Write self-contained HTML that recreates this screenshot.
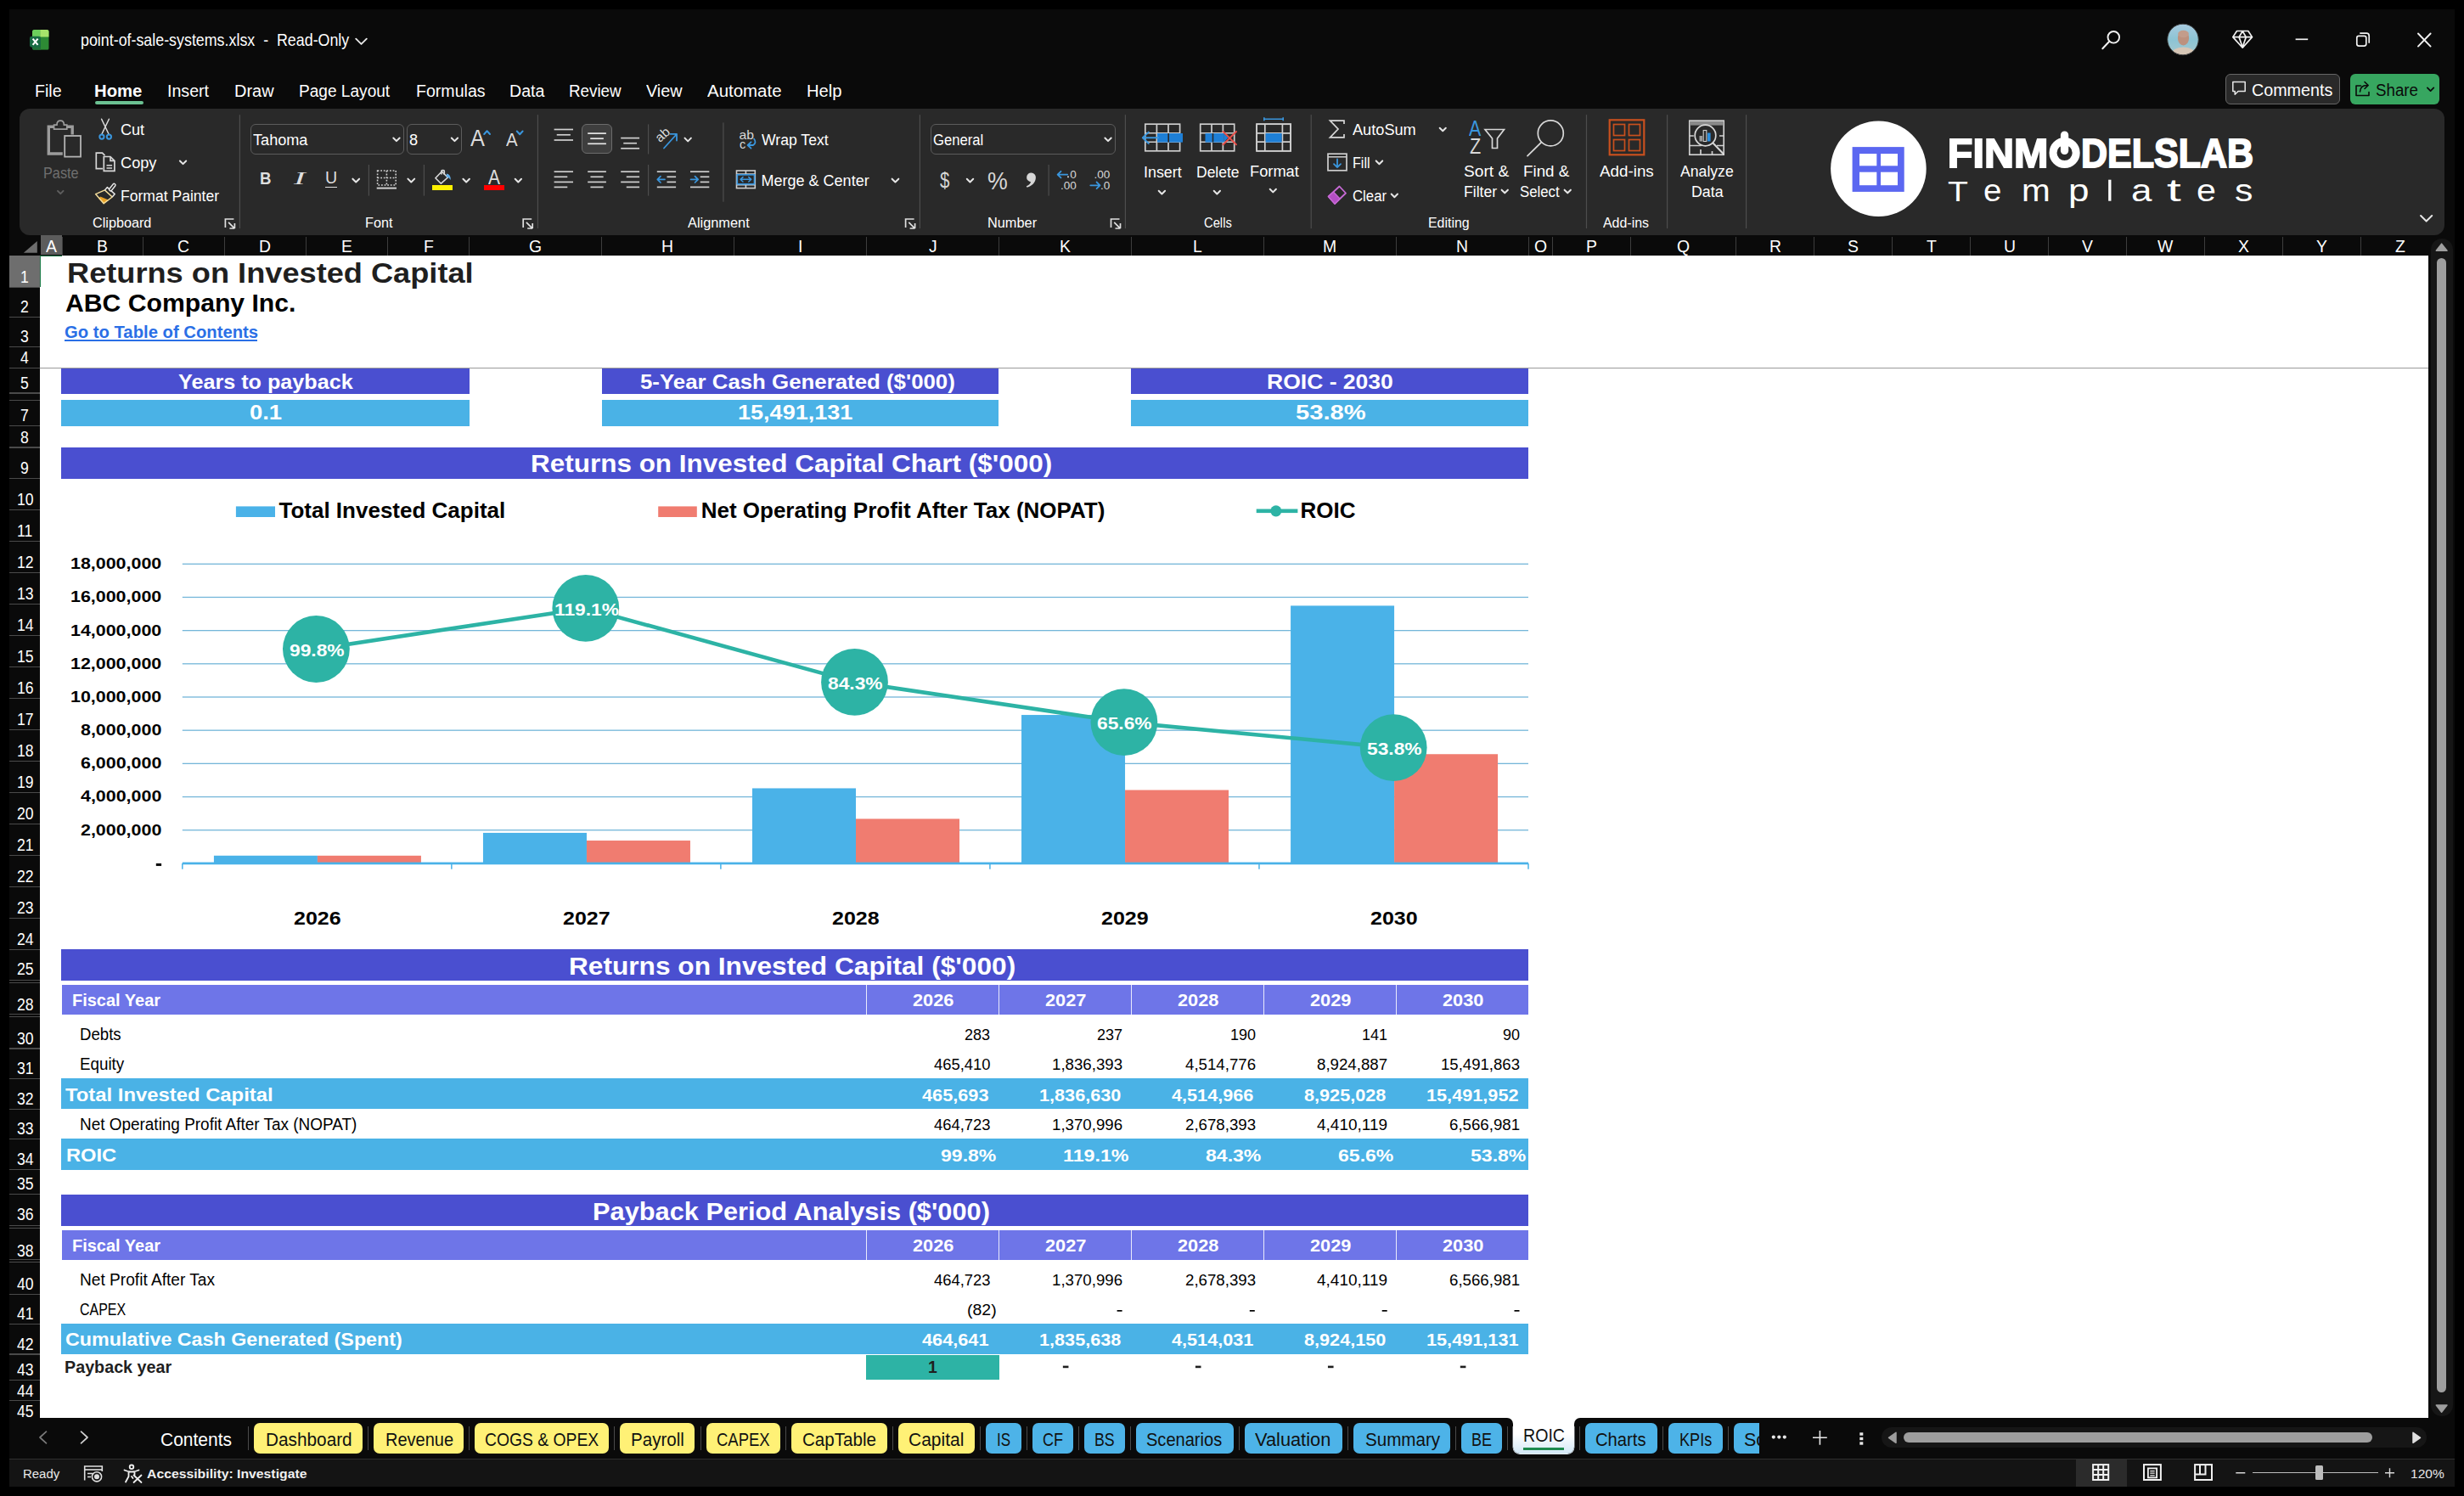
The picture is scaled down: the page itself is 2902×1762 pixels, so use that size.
<!DOCTYPE html>
<html><head><meta charset="utf-8"><title>point-of-sale-systems.xlsx - Excel</title>
<style>
html,body{margin:0;padding:0;background:#000;}
body{width:2902px;height:1762px;position:relative;overflow:hidden;font-family:"Liberation Sans",sans-serif;}
.r{position:absolute;}
.t{position:absolute;white-space:pre;line-height:1;transform-origin:0 0;}
svg.ov{position:absolute;left:0;top:0;}
</style></head><body>
<div class="r" style="left:11px;top:11px;width:2880px;height:1740px;background:#0a0a0a;"></div>
<div class="r" style="left:111.6px;top:119px;width:57px;height:4px;background:#6bc192;border-radius:2px;"></div>
<div class="r" style="left:2621.2px;top:87.1px;width:134.4px;height:35.9px;background:#292929;border-radius:6px;border:1px solid #666;box-sizing:border-box;"></div>
<div class="r" style="left:2768px;top:87.1px;width:105.1px;height:35.9px;background:#37a660;border-radius:6px;"></div>
<div class="r" style="left:23px;top:128px;width:2856px;height:149.3px;background:#292929;border-radius:12px;"></div>
<div class="r" style="left:47.2px;top:301px;width:2813.1px;height:1369px;background:#fff;"></div>
<div class="r" style="left:47.5px;top:277.3px;width:25.5px;height:23.2px;background:#5c5c5c;"></div>
<div class="r" style="left:72.5px;top:279px;width:1px;height:21.5px;background:#3d3d3d;"></div>
<div class="r" style="left:167.9px;top:279px;width:1px;height:21.5px;background:#3d3d3d;"></div>
<div class="r" style="left:263.7px;top:279px;width:1px;height:21.5px;background:#3d3d3d;"></div>
<div class="r" style="left:359.9px;top:279px;width:1px;height:21.5px;background:#3d3d3d;"></div>
<div class="r" style="left:456.1px;top:279px;width:1px;height:21.5px;background:#3d3d3d;"></div>
<div class="r" style="left:552.3px;top:279px;width:1px;height:21.5px;background:#3d3d3d;"></div>
<div class="r" style="left:708.1px;top:279px;width:1px;height:21.5px;background:#3d3d3d;"></div>
<div class="r" style="left:863.9px;top:279px;width:1px;height:21.5px;background:#3d3d3d;"></div>
<div class="r" style="left:1019.8px;top:279px;width:1px;height:21.5px;background:#3d3d3d;"></div>
<div class="r" style="left:1176px;top:279px;width:1px;height:21.5px;background:#3d3d3d;"></div>
<div class="r" style="left:1331.9px;top:279px;width:1px;height:21.5px;background:#3d3d3d;"></div>
<div class="r" style="left:1488.1px;top:279px;width:1px;height:21.5px;background:#3d3d3d;"></div>
<div class="r" style="left:1644px;top:279px;width:1px;height:21.5px;background:#3d3d3d;"></div>
<div class="r" style="left:1799.8px;top:279px;width:1px;height:21.5px;background:#3d3d3d;"></div>
<div class="r" style="left:1827.8px;top:279px;width:1px;height:21.5px;background:#3d3d3d;"></div>
<div class="r" style="left:1920px;top:279px;width:1px;height:21.5px;background:#3d3d3d;"></div>
<div class="r" style="left:2044.2px;top:279px;width:1px;height:21.5px;background:#3d3d3d;"></div>
<div class="r" style="left:2136px;top:279px;width:1px;height:21.5px;background:#3d3d3d;"></div>
<div class="r" style="left:2227.9px;top:279px;width:1px;height:21.5px;background:#3d3d3d;"></div>
<div class="r" style="left:2320.2px;top:279px;width:1px;height:21.5px;background:#3d3d3d;"></div>
<div class="r" style="left:2412.1px;top:279px;width:1px;height:21.5px;background:#3d3d3d;"></div>
<div class="r" style="left:2503.9px;top:279px;width:1px;height:21.5px;background:#3d3d3d;"></div>
<div class="r" style="left:2595.8px;top:279px;width:1px;height:21.5px;background:#3d3d3d;"></div>
<div class="r" style="left:2687.7px;top:279px;width:1px;height:21.5px;background:#3d3d3d;"></div>
<div class="r" style="left:2780px;top:279px;width:1px;height:21.5px;background:#3d3d3d;"></div>
<div class="r" style="left:11px;top:301px;width:36.1px;height:37.5px;background:#6e6e6e;"></div>
<div class="r" style="left:47.1px;top:300.6px;width:1.1px;height:37.9px;background:#1e7e4a;"></div>
<div class="r" style="left:47.1px;top:300.6px;width:25.7px;height:1.1px;background:#1e7e4a;"></div>
<div class="r" style="left:11px;top:337.8px;width:36px;height:1.4px;background:#4a4a4a;"></div>
<div class="r" style="left:11px;top:372.7px;width:36px;height:1.4px;background:#4a4a4a;"></div>
<div class="r" style="left:11px;top:407.6px;width:36px;height:1.4px;background:#4a4a4a;"></div>
<div class="r" style="left:11px;top:432.8px;width:36px;height:1.4px;background:#4a4a4a;"></div>
<div class="r" style="left:11px;top:462.4px;width:36px;height:1.4px;background:#4a4a4a;"></div>
<div class="r" style="left:11px;top:500.6px;width:36px;height:1.4px;background:#4a4a4a;"></div>
<div class="r" style="left:11px;top:526.4px;width:36px;height:1.4px;background:#4a4a4a;"></div>
<div class="r" style="left:11px;top:562.8px;width:36px;height:1.4px;background:#4a4a4a;"></div>
<div class="r" style="left:11px;top:599.8px;width:36px;height:1.4px;background:#4a4a4a;"></div>
<div class="r" style="left:11px;top:636.8px;width:36px;height:1.4px;background:#4a4a4a;"></div>
<div class="r" style="left:11px;top:673.8px;width:36px;height:1.4px;background:#4a4a4a;"></div>
<div class="r" style="left:11px;top:710.8px;width:36px;height:1.4px;background:#4a4a4a;"></div>
<div class="r" style="left:11px;top:747.8px;width:36px;height:1.4px;background:#4a4a4a;"></div>
<div class="r" style="left:11px;top:784.8px;width:36px;height:1.4px;background:#4a4a4a;"></div>
<div class="r" style="left:11px;top:821.8px;width:36px;height:1.4px;background:#4a4a4a;"></div>
<div class="r" style="left:11px;top:858.8px;width:36px;height:1.4px;background:#4a4a4a;"></div>
<div class="r" style="left:11px;top:895.8px;width:36px;height:1.4px;background:#4a4a4a;"></div>
<div class="r" style="left:11px;top:932.8px;width:36px;height:1.4px;background:#4a4a4a;"></div>
<div class="r" style="left:11px;top:969.8px;width:36px;height:1.4px;background:#4a4a4a;"></div>
<div class="r" style="left:11px;top:1006.8px;width:36px;height:1.4px;background:#4a4a4a;"></div>
<div class="r" style="left:11px;top:1043.8px;width:36px;height:1.4px;background:#4a4a4a;"></div>
<div class="r" style="left:11px;top:1080.8px;width:36px;height:1.4px;background:#4a4a4a;"></div>
<div class="r" style="left:11px;top:1117.8px;width:36px;height:1.4px;background:#4a4a4a;"></div>
<div class="r" style="left:11px;top:1154.1px;width:36px;height:1.4px;background:#4a4a4a;"></div>
<div class="r" style="left:11px;top:1193.9px;width:36px;height:1.4px;background:#4a4a4a;"></div>
<div class="r" style="left:11px;top:1234.3px;width:36px;height:1.4px;background:#4a4a4a;"></div>
<div class="r" style="left:11px;top:1269.8px;width:36px;height:1.4px;background:#4a4a4a;"></div>
<div class="r" style="left:11px;top:1305.5px;width:36px;height:1.4px;background:#4a4a4a;"></div>
<div class="r" style="left:11px;top:1340.8px;width:36px;height:1.4px;background:#4a4a4a;"></div>
<div class="r" style="left:11px;top:1376.9px;width:36px;height:1.4px;background:#4a4a4a;"></div>
<div class="r" style="left:11px;top:1405.5px;width:36px;height:1.4px;background:#4a4a4a;"></div>
<div class="r" style="left:11px;top:1442.9px;width:36px;height:1.4px;background:#4a4a4a;"></div>
<div class="r" style="left:11px;top:1483.1px;width:36px;height:1.4px;background:#4a4a4a;"></div>
<div class="r" style="left:11px;top:1523.6px;width:36px;height:1.4px;background:#4a4a4a;"></div>
<div class="r" style="left:11px;top:1558.5px;width:36px;height:1.4px;background:#4a4a4a;"></div>
<div class="r" style="left:11px;top:1594.3px;width:36px;height:1.4px;background:#4a4a4a;"></div>
<div class="r" style="left:11px;top:1624.7px;width:36px;height:1.4px;background:#4a4a4a;"></div>
<div class="r" style="left:11px;top:1649px;width:36px;height:1.4px;background:#4a4a4a;"></div>
<div class="r" style="left:11px;top:1685.3px;width:36px;height:1.4px;background:#4a4a4a;"></div>
<div class="r" style="left:11px;top:470.7px;width:35.5px;height:1.2px;background:#4a4a4a;"></div>
<div class="r" style="left:11px;top:1156.9px;width:35.5px;height:1.2px;background:#4a4a4a;"></div>
<div class="r" style="left:11px;top:1197px;width:35.5px;height:1.2px;background:#4a4a4a;"></div>
<div class="r" style="left:11px;top:1445.6px;width:35.5px;height:1.2px;background:#4a4a4a;"></div>
<div class="r" style="left:11px;top:1486.1px;width:35.5px;height:1.2px;background:#4a4a4a;"></div>
<div class="r" style="left:47.2px;top:433px;width:2813.1px;height:1.1px;background:#9a9a9a;"></div>
<div class="r" style="left:76.3px;top:400.2px;width:226.5px;height:1.8px;background:#2a6fe6;"></div>
<div class="r" style="left:72.2px;top:434px;width:480.6px;height:29.6px;background:#4a4fd0;"></div>
<div class="r" style="left:72.2px;top:470.9px;width:480.6px;height:30.8px;background:#4ab2e6;"></div>
<div class="r" style="left:708.6px;top:434px;width:467.9px;height:29.6px;background:#4a4fd0;"></div>
<div class="r" style="left:708.6px;top:470.9px;width:467.9px;height:30.8px;background:#4ab2e6;"></div>
<div class="r" style="left:1332.4px;top:434px;width:467.9px;height:29.6px;background:#4a4fd0;"></div>
<div class="r" style="left:1332.4px;top:470.9px;width:467.9px;height:30.8px;background:#4ab2e6;"></div>
<div class="r" style="left:72.2px;top:526.9px;width:1728.1px;height:36.9px;background:#4a4fd0;"></div>
<div class="r" style="left:72.2px;top:1118.3px;width:1728.1px;height:36.5px;background:#4a4fd0;"></div>
<div class="r" style="left:72.2px;top:1407px;width:1728.1px;height:36.6px;background:#4a4fd0;"></div>
<div class="r" style="left:73.1px;top:1159.9px;width:1727.2px;height:34.8px;background:#6e75e8;"></div>
<div class="r" style="left:1019.8px;top:1159.9px;width:1px;height:34.8px;background:#e9eafc;"></div>
<div class="r" style="left:1176px;top:1159.9px;width:1px;height:34.8px;background:#e9eafc;"></div>
<div class="r" style="left:1331.9px;top:1159.9px;width:1px;height:34.8px;background:#e9eafc;"></div>
<div class="r" style="left:1488.1px;top:1159.9px;width:1px;height:34.8px;background:#e9eafc;"></div>
<div class="r" style="left:1644px;top:1159.9px;width:1px;height:34.8px;background:#e9eafc;"></div>
<div class="r" style="left:73.1px;top:1449.1px;width:1727.2px;height:34.8px;background:#6e75e8;"></div>
<div class="r" style="left:1019.8px;top:1449.1px;width:1px;height:34.8px;background:#e9eafc;"></div>
<div class="r" style="left:1176px;top:1449.1px;width:1px;height:34.8px;background:#e9eafc;"></div>
<div class="r" style="left:1331.9px;top:1449.1px;width:1px;height:34.8px;background:#e9eafc;"></div>
<div class="r" style="left:1488.1px;top:1449.1px;width:1px;height:34.8px;background:#e9eafc;"></div>
<div class="r" style="left:1644px;top:1449.1px;width:1px;height:34.8px;background:#e9eafc;"></div>
<div class="r" style="left:72px;top:1270.3px;width:1728.3px;height:35.9px;background:#4ab2e6;"></div>
<div class="r" style="left:72px;top:1341.4px;width:1728.3px;height:36.2px;background:#4ab2e6;"></div>
<div class="r" style="left:72px;top:1559.4px;width:1728.3px;height:35.6px;background:#4ab2e6;"></div>
<div class="r" style="left:1020.3px;top:1596.2px;width:156.7px;height:28.4px;background:#2db3a5;"></div>
<div class="r" style="left:295px;top:146px;width:180.6px;height:35.9px;background:#292929;border-radius:6px;border:1px solid #5c5c5c;box-sizing:border-box;"></div>
<div class="r" style="left:479.1px;top:146px;width:64.6px;height:35.9px;background:#292929;border-radius:6px;border:1px solid #5c5c5c;box-sizing:border-box;"></div>
<div class="r" style="left:383.2px;top:219.6px;width:13.8px;height:1.6px;background:#dedede;"></div>
<div class="r" style="left:509px;top:218px;width:23.9px;height:5.9px;background:#fff100;"></div>
<div class="r" style="left:569.8px;top:218px;width:24.4px;height:5.9px;background:#ff0000;"></div>
<div class="r" style="left:685.1px;top:146.4px;width:35.5px;height:35.1px;background:#3e3e3e;border-radius:6px;border:1px solid #6c6c6c;box-sizing:border-box;"></div>
<div class="r" style="left:1096.1px;top:146px;width:217.6px;height:35.9px;background:#292929;border-radius:6px;border:1px solid #5c5c5c;box-sizing:border-box;"></div>
<div class="r" style="left:11px;top:1670px;width:2880px;height:48.5px;background:#0a0a0a;"></div>
<div class="r" style="left:11px;top:1718px;width:2880px;height:1.2px;background:#2e2e2e;"></div>
<div class="r" style="left:11px;top:1719.2px;width:2880px;height:31.8px;background:#141414;"></div>
<div class="r" style="left:2860.3px;top:277.3px;width:30.7px;height:1392.7px;background:#0a0a0a;"></div>
<div class="r" style="left:2862.5px;top:281px;width:26.5px;height:1387px;background:#161616;border-radius:13px;"></div>
<div class="r" style="left:2869.8px;top:304px;width:11.7px;height:1336px;background:#9e9e9e;border-radius:6px;"></div>
<div class="r" style="left:2216px;top:1681px;width:642.4px;height:23.8px;background:#161616;border-radius:12px;"></div>
<div class="r" style="left:2241.6px;top:1687.3px;width:552.8px;height:12px;background:#9e9e9e;border-radius:6px;"></div>
<div class="r" style="left:299.2px;top:1675.8px;width:127.5px;height:36.1px;background:#fff176;border-radius:7px;"></div>
<div class="r" style="left:291.9px;top:1680.4px;width:1.2px;height:27.4px;background:#4a4a4a;"></div>
<div class="r" style="left:440.1px;top:1675.8px;width:105.7px;height:36.1px;background:#fff176;border-radius:7px;"></div>
<div class="r" style="left:432.8px;top:1680.4px;width:1.2px;height:27.4px;background:#4a4a4a;"></div>
<div class="r" style="left:559.2px;top:1675.8px;width:157.6px;height:36.1px;background:#fff176;border-radius:7px;"></div>
<div class="r" style="left:551.9px;top:1680.4px;width:1.2px;height:27.4px;background:#4a4a4a;"></div>
<div class="r" style="left:730.2px;top:1675.8px;width:88.3px;height:36.1px;background:#fff176;border-radius:7px;"></div>
<div class="r" style="left:722.9px;top:1680.4px;width:1.2px;height:27.4px;background:#4a4a4a;"></div>
<div class="r" style="left:832.2px;top:1675.8px;width:86.5px;height:36.1px;background:#fff176;border-radius:7px;"></div>
<div class="r" style="left:824.9px;top:1680.4px;width:1.2px;height:27.4px;background:#4a4a4a;"></div>
<div class="r" style="left:932.1px;top:1675.8px;width:112.6px;height:36.1px;background:#fff176;border-radius:7px;"></div>
<div class="r" style="left:924.8px;top:1680.4px;width:1.2px;height:27.4px;background:#4a4a4a;"></div>
<div class="r" style="left:1058.1px;top:1675.8px;width:89.8px;height:36.1px;background:#fff176;border-radius:7px;"></div>
<div class="r" style="left:1050.8px;top:1680.4px;width:1.2px;height:27.4px;background:#4a4a4a;"></div>
<div class="r" style="left:1161.3px;top:1675.8px;width:41.4px;height:36.1px;background:#4db3e8;border-radius:7px;"></div>
<div class="r" style="left:1154px;top:1680.4px;width:1.2px;height:27.4px;background:#4a4a4a;"></div>
<div class="r" style="left:1216px;top:1675.8px;width:47.5px;height:36.1px;background:#4db3e8;border-radius:7px;"></div>
<div class="r" style="left:1208.7px;top:1680.4px;width:1.2px;height:27.4px;background:#4a4a4a;"></div>
<div class="r" style="left:1277.2px;top:1675.8px;width:47.5px;height:36.1px;background:#4db3e8;border-radius:7px;"></div>
<div class="r" style="left:1269.9px;top:1680.4px;width:1.2px;height:27.4px;background:#4a4a4a;"></div>
<div class="r" style="left:1338.1px;top:1675.8px;width:114.5px;height:36.1px;background:#4db3e8;border-radius:7px;"></div>
<div class="r" style="left:1330.8px;top:1680.4px;width:1.2px;height:27.4px;background:#4a4a4a;"></div>
<div class="r" style="left:1466px;top:1675.8px;width:114.8px;height:36.1px;background:#4db3e8;border-radius:7px;"></div>
<div class="r" style="left:1458.7px;top:1680.4px;width:1.2px;height:27.4px;background:#4a4a4a;"></div>
<div class="r" style="left:1594.1px;top:1675.8px;width:113.6px;height:36.1px;background:#4db3e8;border-radius:7px;"></div>
<div class="r" style="left:1586.8px;top:1680.4px;width:1.2px;height:27.4px;background:#4a4a4a;"></div>
<div class="r" style="left:1721.1px;top:1675.8px;width:47.8px;height:36.1px;background:#4db3e8;border-radius:7px;"></div>
<div class="r" style="left:1713.8px;top:1680.4px;width:1.2px;height:27.4px;background:#4a4a4a;"></div>
<div class="r" style="left:1867.2px;top:1675.8px;width:84.6px;height:36.1px;background:#4db3e8;border-radius:7px;"></div>
<div class="r" style="left:1859.9px;top:1680.4px;width:1.2px;height:27.4px;background:#4a4a4a;"></div>
<div class="r" style="left:1965.2px;top:1675.8px;width:63.6px;height:36.1px;background:#4db3e8;border-radius:7px;"></div>
<div class="r" style="left:1957.9px;top:1680.4px;width:1.2px;height:27.4px;background:#4a4a4a;"></div>
<div class="r" style="left:2042.2px;top:1675.8px;width:29.8px;height:36.1px;background:#4db3e8;border-radius:7px 0 0 7px;"></div>
<div class="r" style="left:2034.9px;top:1680.4px;width:1.2px;height:27.4px;background:#4a4a4a;"></div>
<div class="r" style="left:1782.3px;top:1669.5px;width:71.5px;height:42.3px;background:linear-gradient(#ffffff 45%,#d3e8f7);border-radius:0 0 8px 8px;box-shadow:0 0.5px 0 0.4px #e6eef5;"></div>
<div class="r" style="left:1775.3px;top:1669.5px;width:7px;height:7px;background:#fff;"></div>
<div class="r" style="left:1853.8px;top:1669.5px;width:7px;height:7px;background:#fff;"></div>
<div class="r" style="left:1770px;top:1670px;width:12.3px;height:10px;background:#0a0a0a;border-radius:0 7px 0 0;"></div>
<div class="r" style="left:1853.8px;top:1670px;width:12.2px;height:10px;background:#0a0a0a;border-radius:7px 0 0 0;"></div>
<div class="r" style="left:1794.2px;top:1704.6px;width:48.2px;height:3.3px;background:#1d8a4e;"></div>
<div class="r" style="left:1859.9px;top:1680.4px;width:1.2px;height:27.4px;background:#4a4a4a;"></div>
<div class="r" style="left:1775px;top:1680.4px;width:1.2px;height:27.4px;background:#4a4a4a;"></div>
<div class="r" style="left:2444.8px;top:1719.2px;width:60.4px;height:31.8px;background:#2b2b2b;"></div>
<div class="r" style="left:2652.7px;top:1734.2px;width:147.9px;height:1.3px;background:#bdbdbd;"></div>
<div class="r" style="left:2727.4px;top:1726px;width:8.4px;height:17.3px;background:#bdbdbd;border-radius:1.5px;"></div>
<svg class="ov" width="2902" height="1762" viewBox="0 0 2902 1762">
<path d="M43.8 284 L43.8 297.8 L27.8 297.8 Z" fill="#6e6e6e"/>
<rect x="1315.6" y="1543" width="6" height="1.7" fill="#000"/>
<rect x="1471.8" y="1543" width="6" height="1.7" fill="#000"/>
<rect x="1627.7" y="1543" width="6" height="1.7" fill="#000"/>
<rect x="1783.5" y="1543" width="6" height="1.7" fill="#000"/>
<rect x="1251.85" y="1608.6" width="6.6" height="2.6" fill="#1f1f1f"/>
<rect x="1407.9" y="1608.6" width="6.6" height="2.6" fill="#1f1f1f"/>
<rect x="1563.95" y="1608.6" width="6.6" height="2.6" fill="#1f1f1f"/>
<rect x="1719.8" y="1608.6" width="6.6" height="2.6" fill="#1f1f1f"/>
<rect x="214.8" y="663.63" width="1585.2" height="1.3" fill="#74b6d9"/>
<rect x="214.8" y="702.81" width="1585.2" height="1.3" fill="#74b6d9"/>
<rect x="214.8" y="741.99" width="1585.2" height="1.3" fill="#74b6d9"/>
<rect x="214.8" y="781.17" width="1585.2" height="1.3" fill="#74b6d9"/>
<rect x="214.8" y="820.35" width="1585.2" height="1.3" fill="#74b6d9"/>
<rect x="214.8" y="859.53" width="1585.2" height="1.3" fill="#74b6d9"/>
<rect x="214.8" y="898.71" width="1585.2" height="1.3" fill="#74b6d9"/>
<rect x="214.8" y="937.89" width="1585.2" height="1.3" fill="#74b6d9"/>
<rect x="214.8" y="977.07" width="1585.2" height="1.3" fill="#74b6d9"/>
<rect x="183.8" y="1016.9" width="6.3" height="3" fill="#000"/>
<rect x="251.92" y="1007.78" width="122" height="9.12" fill="#4ab2e8"/>
<rect x="373.92" y="1007.8" width="122" height="9.1" fill="#f07c70"/>
<rect x="568.96" y="980.92" width="122" height="35.98" fill="#4ab2e8"/>
<rect x="690.96" y="990.04" width="122" height="26.86" fill="#f07c70"/>
<rect x="886" y="928.45" width="122" height="88.45" fill="#4ab2e8"/>
<rect x="1008" y="964.43" width="122" height="52.47" fill="#f07c70"/>
<rect x="1203.04" y="842.06" width="122" height="174.84" fill="#4ab2e8"/>
<rect x="1325.04" y="930.51" width="122" height="86.39" fill="#f07c70"/>
<rect x="1520.08" y="713.41" width="122" height="303.49" fill="#4ab2e8"/>
<rect x="1642.08" y="888.25" width="122" height="128.65" fill="#f07c70"/>
<rect x="214.8" y="1015.55" width="1585.2" height="2.7" fill="#4ab2e8"/>
<rect x="214.05" y="1016.9" width="1.5" height="6.8" fill="#4ab2e8"/>
<rect x="531.09" y="1016.9" width="1.5" height="6.8" fill="#4ab2e8"/>
<rect x="848.13" y="1016.9" width="1.5" height="6.8" fill="#4ab2e8"/>
<rect x="1165.17" y="1016.9" width="1.5" height="6.8" fill="#4ab2e8"/>
<rect x="1482.21" y="1016.9" width="1.5" height="6.8" fill="#4ab2e8"/>
<rect x="1799.25" y="1016.9" width="1.5" height="6.8" fill="#4ab2e8"/>
<polyline points="372.4,764.5 689.8,716.4 1006.5,803.4 1323.9,850.6 1641.2,880.6" fill="none" stroke="#2db3a5" stroke-width="4.6" stroke-linejoin="round"/>
<circle cx="372.4" cy="764.5" r="39.4" fill="#2db3a5"/>
<circle cx="689.8" cy="716.4" r="39.4" fill="#2db3a5"/>
<circle cx="1006.5" cy="803.4" r="39.4" fill="#2db3a5"/>
<circle cx="1323.9" cy="850.6" r="39.4" fill="#2db3a5"/>
<circle cx="1641.2" cy="880.6" r="39.4" fill="#2db3a5"/>
<rect x="277.9" y="596.4" width="46.1" height="12.6" fill="#4ab2e8"/>
<rect x="775.2" y="596.4" width="45.6" height="12.6" fill="#f07c70"/>
<rect x="1479.7" y="599.5" width="48.7" height="4.6" fill="#2db3a5"/><circle cx="1502.8" cy="601.8" r="6.6" fill="#2db3a5"/>
<g fill="none" stroke="#9c9c9c"><path d="M73.8 181 H57.3 V149.3 H63.5 M79 149.3 H85.2 V158.5" stroke-width="3.4"/><path d="M63.6 152.2 V147.2 H67 Q67 142.2 71.2 142.2 Q75.4 142.2 75.4 147.2 H78.8 V152.2 Z" stroke-width="1.7" fill="#292929"/></g>
<rect x="76.2" y="160" width="18.8" height="24.6" fill="#292929" stroke="#b4b4b4" stroke-width="1.8"/>
<path d="M68 224.88 L71.25 228.12 L74.5 224.88" fill="none" stroke="#5e5e5e" stroke-width="2.0" stroke-linecap="round" stroke-linejoin="round"/>
<g fill="none"><path d="M119.6 140.2 L128 157.8 M128.4 140.2 L120 157.8" stroke="#dcdcdc" stroke-width="1.5" stroke-linecap="round"/><circle cx="119.9" cy="161.1" r="2.6" stroke="#3a96dd" stroke-width="2"/><circle cx="128.4" cy="161.1" r="2.6" stroke="#3a96dd" stroke-width="2"/></g>
<g fill="none" stroke="#d6d6d6" stroke-width="1.7" stroke-linejoin="miter"><path d="M121 198.6 H113.3 V180.2 H120.5 L123.5 183.2"/><path d="M122.3 184.5 H130 L134.9 189.4 V201.4 H122.3 Z M130 184.5 V189.4 H134.9"/><path d="M125.5 194.8 h6.6 M125.5 197.9 h6.6" stroke-width="1.5"/></g>
<path d="M211.9 189.47 L215.55 193.13 L219.2 189.47" fill="none" stroke="#e6e6e6" stroke-width="2.0" stroke-linecap="round" stroke-linejoin="round"/>
<g stroke-linejoin="round"><path d="M118 231.6 L127.8 235.4 L122.2 239.6 L116.3 234 Z" fill="#e9a227"/><path d="M112.6 228.6 L123.4 223.9 L132.2 232 L122.2 239.7 Z" fill="none" stroke="#f4dc9a" stroke-width="1.5"/><path d="M123.4 223.9 L126.4 220.6 L135.2 228.6 L132.2 232" fill="none" stroke="#e6e6e6" stroke-width="1.5"/><path d="M130.2 223.2 L134.4 218" stroke="#e6e6e6" stroke-width="4.6" stroke-linecap="round"/><path d="M130.2 223.2 L134.4 218" stroke="#292929" stroke-width="1.7" stroke-linecap="round"/></g>
<path d="M275.4 258 h-10 v10 M269.1 261.8 l7 7 M276.4 269 v-6 M276.4 269 h-6" fill="none" stroke="#e0e0e0" stroke-width="1.7" transform="translate(0,0)"/>
<rect x="281.8" y="135.2" width="1.2" height="133.9" fill="#4d4d4d"/>
<path d="M463.3 162.48 L466.95 166.12 L470.6 162.48" fill="none" stroke="#e6e6e6" stroke-width="2.0" stroke-linecap="round" stroke-linejoin="round"/>
<path d="M531.8 162.48 L535.45 166.12 L539.1 162.48" fill="none" stroke="#e6e6e6" stroke-width="2.0" stroke-linecap="round" stroke-linejoin="round"/>
<path d="M570.2 158 L573.6 154.3 L577 158" fill="none" stroke="#3a96dd" stroke-width="2" stroke-linecap="round" stroke-linejoin="round"/>
<path d="M608.8 154.5 L612.2 158.2 L615.6 154.5" fill="none" stroke="#3a96dd" stroke-width="2" stroke-linecap="round" stroke-linejoin="round"/>
<path d="M415.4 210.67 L419.25 214.53 L423.1 210.67" fill="none" stroke="#e6e6e6" stroke-width="2.0" stroke-linecap="round" stroke-linejoin="round"/>
<rect x="433.8" y="194" width="1.2" height="36.6" fill="#4d4d4d"/>
<g fill="none" stroke="#d0d0d0"><rect x="444.6" y="201" width="21.6" height="17" stroke-width="1.6" stroke-dasharray="1.8 1.8"/><path d="M455.4 201 v17 M444.6 209.5 h21.6" stroke-width="1.6" stroke-dasharray="1.8 1.8"/><path d="M443.7 221.6 h23.3" stroke-width="2"/></g>
<path d="M480.4 210.65 L484.3 214.55 L488.2 210.65" fill="none" stroke="#e6e6e6" stroke-width="2.0" stroke-linecap="round" stroke-linejoin="round"/>
<rect x="498.8" y="194" width="1.2" height="36.6" fill="#4d4d4d"/>
<g fill="none" stroke="#dadada" stroke-width="1.6" stroke-linejoin="round"><path d="M512.9 209.7 L520.3 202 L527.4 209 L519.4 216.2 Z"/><path d="M519.9 205.5 V201.6 Q519.9 200.6 520.9 200.6 H522.3 Q523.3 200.6 523.3 201.6 V205.7"/></g><path d="M526 204.6 Q530.9 205.6 530.8 211.9 Q528.6 208.6 525.6 208.2 Z" fill="#62aeea"/>
<path d="M545.4 210.73 L549.15 214.47 L552.9 210.73" fill="none" stroke="#e6e6e6" stroke-width="2.0" stroke-linecap="round" stroke-linejoin="round"/>
<path d="M606.7 210.78 L610.35 214.42 L614 210.78" fill="none" stroke="#e6e6e6" stroke-width="2.0" stroke-linecap="round" stroke-linejoin="round"/>
<path d="M626.2 258 h-10 v10 M619.9 261.8 l7 7 M627.2 269 v-6 M627.2 269 h-6" fill="none" stroke="#e0e0e0" stroke-width="1.7" transform="translate(0,0)"/>
<rect x="632.8" y="135.2" width="1.2" height="133.9" fill="#4d4d4d"/>
<rect x="652.6" y="151.65" width="22.4" height="1.7" fill="#d0d0d0"/><rect x="655.74" y="157.95" width="16.13" height="1.7" fill="#d0d0d0"/><rect x="652.6" y="164.15" width="22.4" height="1.7" fill="#d0d0d0"/>
<rect x="692.2" y="156.25" width="21.7" height="1.7" fill="#e6e6e6"/><rect x="695.24" y="162.35" width="15.62" height="1.7" fill="#e6e6e6"/><rect x="692.2" y="168.45" width="21.7" height="1.7" fill="#e6e6e6"/>
<rect x="731.2" y="161.75" width="21.9" height="1.7" fill="#d0d0d0"/><rect x="734.27" y="167.85" width="15.77" height="1.7" fill="#d0d0d0"/><rect x="731.2" y="173.95" width="21.9" height="1.7" fill="#d0d0d0"/>
<rect x="763" y="146.4" width="1.2" height="35.1" fill="#4d4d4d"/>
<g><text x="0" y="0" font-family="Liberation Sans" font-size="15.5" fill="#dcdcdc" transform="translate(777.3 168.3) rotate(-42)">ab</text><path d="M782 174.5 L796.5 158.5 M789.5 157.8 L797 157.8 L797 165.5" fill="none" stroke="#3a96dd" stroke-width="1.8" stroke-linecap="round" stroke-linejoin="round"/></g>
<path d="M806.5 162.65 L810.2 166.35 L813.9 162.65" fill="none" stroke="#e6e6e6" stroke-width="2.0" stroke-linecap="round" stroke-linejoin="round"/>
<rect x="851.3" y="144.4" width="1.2" height="93.3" fill="#4d4d4d"/>
<rect x="652.6" y="201.35" width="22.4" height="1.7" fill="#d0d0d0"/><rect x="652.6" y="207.45" width="15.68" height="1.7" fill="#d0d0d0"/><rect x="652.6" y="213.55" width="22.4" height="1.7" fill="#d0d0d0"/><rect x="652.6" y="219.55" width="15.68" height="1.7" fill="#d0d0d0"/>
<rect x="692.2" y="201.35" width="21.7" height="1.7" fill="#d0d0d0"/><rect x="695.45" y="207.45" width="15.19" height="1.7" fill="#d0d0d0"/><rect x="692.2" y="213.55" width="21.7" height="1.7" fill="#d0d0d0"/><rect x="695.45" y="219.55" width="15.19" height="1.7" fill="#d0d0d0"/>
<rect x="731.2" y="201.35" width="21.9" height="1.7" fill="#d0d0d0"/><rect x="737.77" y="207.45" width="15.33" height="1.7" fill="#d0d0d0"/><rect x="731.2" y="213.55" width="21.9" height="1.7" fill="#d0d0d0"/><rect x="737.77" y="219.55" width="15.33" height="1.7" fill="#d0d0d0"/>
<rect x="763" y="194" width="1.2" height="36.6" fill="#4d4d4d"/>
<rect x="773.8" y="201.35" width="22.3" height="1.7" fill="#d0d0d0"/><rect x="773.8" y="219.55" width="22.3" height="1.7" fill="#d0d0d0"/>
<rect x="785.5" y="207.45" width="10.6" height="1.7" fill="#d0d0d0"/><rect x="785.5" y="213.55" width="10.6" height="1.7" fill="#d0d0d0"/>
<path d="M783 211.3 L774.5 211.3 M778 207.6 L774.3 211.3 L778 215" fill="none" stroke="#3a96dd" stroke-width="1.7" stroke-linecap="round" stroke-linejoin="round"/>
<rect x="813" y="201.35" width="22.3" height="1.7" fill="#d0d0d0"/><rect x="813" y="219.55" width="22.3" height="1.7" fill="#d0d0d0"/>
<rect x="824.7" y="207.45" width="10.6" height="1.7" fill="#d0d0d0"/><rect x="824.7" y="213.55" width="10.6" height="1.7" fill="#d0d0d0"/>
<path d="M813.5 211.3 L822 211.3 M818.5 207.6 L822.2 211.3 L818.5 215" fill="none" stroke="#3a96dd" stroke-width="1.7" stroke-linecap="round" stroke-linejoin="round"/>
<text x="870.6" y="164" font-family="Liberation Sans" font-size="14.5" fill="#d8d8d8" textLength="17.5" lengthAdjust="spacingAndGlyphs">ab</text><text x="871" y="174.6" font-family="Liberation Sans" font-size="14.5" fill="#d8d8d8">c</text>
<path d="M888 163.5 Q891.5 168 887 171 L881 171 M884.5 167.3 L880.6 171 L884.5 174.7" fill="none" stroke="#3a96dd" stroke-width="1.8" stroke-linecap="round" stroke-linejoin="round"/>
<g fill="none" stroke="#d0d0d0" stroke-width="1.6"><rect x="867.5" y="201" width="21.8" height="20.6"/><path d="M878.4 201 v4 M878.4 217.6 v4 M867.5 205 h21.8 M867.5 217.6 h21.8" /></g><rect x="868.3" y="205.8" width="20.2" height="11" fill="none" stroke="#3a96dd" stroke-width="1.7"/><path d="M872 211.3 h12.8 M875 208.6 L872 211.3 L875 214 M881.8 208.6 L884.8 211.3 L881.8 214" fill="none" stroke="#3a96dd" stroke-width="1.5" stroke-linecap="round" stroke-linejoin="round"/>
<path d="M1050.6 210.68 L1054.45 214.52 L1058.3 210.68" fill="none" stroke="#e6e6e6" stroke-width="2.0" stroke-linecap="round" stroke-linejoin="round"/>
<path d="M1076.6 258 h-10 v10 M1070.3 261.8 l7 7 M1077.6 269 v-6 M1077.6 269 h-6" fill="none" stroke="#e0e0e0" stroke-width="1.7" transform="translate(0,0)"/>
<rect x="1082.8" y="135.2" width="1.2" height="133.9" fill="#4d4d4d"/>
<path d="M1301.4 162.48 L1305.05 166.12 L1308.7 162.48" fill="none" stroke="#e6e6e6" stroke-width="2.0" stroke-linecap="round" stroke-linejoin="round"/>
<path d="M1138.8 210.75 L1142.5 214.45 L1146.2 210.75" fill="none" stroke="#e6e6e6" stroke-width="2.0" stroke-linecap="round" stroke-linejoin="round"/>
<path d="M1219.9 209 C1219.9 214.5 1215.5 219.3 1209.6 220.8 L1208.8 219.3 C1212 218 1213.8 215.8 1214 214.2 A5.4 5.4 0 1 1 1219.9 209 Z" fill="#d6d6d6"/>
<rect x="1234.5" y="194" width="1.2" height="36.6" fill="#4d4d4d"/>
<g font-family="Liberation Sans" font-size="13.5" fill="#d8d8d8"><text x="1260.2" y="209.6">0</text><text x="1249" y="222.8">.00</text></g><path d="M1257.2 205.6 L1245.7 205.6 M1249.5 201.8 L1245.6 205.6 L1249.5 209.4" fill="none" stroke="#3a96dd" stroke-width="1.8" stroke-linecap="round" stroke-linejoin="round"/><rect x="1257.1" y="207.4" width="1.8" height="1.8" fill="#d8d8d8"/>
<g font-family="Liberation Sans" font-size="13.5" fill="#d8d8d8"><text x="1288.6" y="209.6">.00</text><text x="1296" y="222.8">.0</text></g><path d="M1284.3 218.3 L1295.3 218.3 M1291.6 214.5 L1295.5 218.3 L1291.6 222.1" fill="none" stroke="#3a96dd" stroke-width="1.8" stroke-linecap="round" stroke-linejoin="round"/>
<path d="M1318.5 258 h-10 v10 M1312.2 261.8 l7 7 M1319.5 269 v-6 M1319.5 269 h-6" fill="none" stroke="#e0e0e0" stroke-width="1.7" transform="translate(0,0)"/>
<rect x="1324.8" y="135.2" width="1.2" height="133.9" fill="#4d4d4d"/>
<g fill="none" stroke="#cfcfcf" stroke-width="1.7"><rect x="1348.8" y="146.2" width="40.8" height="31.6"/><path d="M1362.4 146.2 V177.8 M1376 146.2 V177.8 M1348.8 156.73 H1389.6 M1348.8 167.27 H1389.6 "/></g>
<rect x="1363" y="157" width="30" height="10.6" fill="#1e7fd6"/><path d="M1376.2 157 v10.6" stroke="#292929" stroke-width="1.6"/>
<path d="M1364 162.3 H1346.5 M1352.8 155.6 L1345.8 162.3 L1352.8 169" fill="none" stroke="#3a96dd" stroke-width="1.9" stroke-linecap="round" stroke-linejoin="round"/>
<path d="M1364.7 224.75 L1368.4 228.45 L1372.1 224.75" fill="none" stroke="#e6e6e6" stroke-width="2.0" stroke-linecap="round" stroke-linejoin="round"/>
<g fill="none" stroke="#cfcfcf" stroke-width="1.7"><rect x="1413.7" y="146.2" width="40" height="31.6"/><path d="M1427.03 146.2 V177.8 M1440.37 146.2 V177.8 M1413.7 156.73 H1453.7 M1413.7 167.27 H1453.7 "/></g>
<rect x="1419.5" y="157" width="22" height="10.6" fill="#1e7fd6"/><path d="M1428.5 157 v10.6" stroke="#292929" stroke-width="1.6"/><path d="M1441.5 157 L1446.5 162.3 L1441.5 167.6 Z" fill="#1e7fd6"/>
<path d="M1440.5 155 L1456 170.3 M1456 155 L1440.5 170.3" fill="none" stroke="#e8504a" stroke-width="1.9" stroke-linecap="round"/>
<path d="M1429.7 224.78 L1433.35 228.42 L1437 224.78" fill="none" stroke="#e6e6e6" stroke-width="2.0" stroke-linecap="round" stroke-linejoin="round"/>
<g fill="none" stroke="#cfcfcf" stroke-width="1.7"><rect x="1480.1" y="146.2" width="40" height="31.6"/><path d="M1490.1 146.2 V177.8 M1500.1 146.2 V177.8 M1510.1 146.2 V177.8 M1480.1 156.73 H1520.1 M1480.1 167.27 H1520.1 "/></g>
<rect x="1489.8" y="146.2" width="20.6" height="31.6" fill="#292929"/>
<g fill="none" stroke="#cfcfcf" stroke-width="1.7"><rect x="1480.1" y="146.2" width="40" height="31.6"/><path d="M1480.1 156.73 H1520.1 M1480.1 167.27 H1520.1 "/></g>
<path d="M1489.8 146.2 V177.8 M1510.4 146.2 V177.8" stroke="#cfcfcf" stroke-width="1.7"/>
<rect x="1490.6" y="157" width="19" height="10.6" fill="#1e7fd6"/>
<path d="M1488.5 140.3 H1511.5 M1488.8 138.3 v4 M1511.2 138.3 v4" stroke="#3a96dd" stroke-width="1.6" fill="none"/>
<path d="M1495.7 222.8 L1499.3 226.4 L1502.9 222.8" fill="none" stroke="#e6e6e6" stroke-width="2.0" stroke-linecap="round" stroke-linejoin="round"/>
<rect x="1543.6" y="135.2" width="1.2" height="133.9" fill="#4d4d4d"/>
<path d="M1583 146 V142.2 H1566.5 L1576 152 L1566.5 161.8 H1583 V158" fill="none" stroke="#d8d8d8" stroke-width="1.7" stroke-linejoin="miter"/>
<path d="M1695.7 150.73 L1699.25 154.27 L1702.8 150.73" fill="none" stroke="#e6e6e6" stroke-width="2.0" stroke-linecap="round" stroke-linejoin="round"/>
<rect x="1564" y="181.2" width="22" height="19.6" fill="none" stroke="#cfcfcf" stroke-width="1.7"/><path d="M1564 184.8 h22" stroke="#cfcfcf" stroke-width="1.5"/><path d="M1575 187.5 V197 M1571 193.2 L1575 197.2 L1579 193.2" fill="none" stroke="#3a96dd" stroke-width="1.8" stroke-linecap="round" stroke-linejoin="round"/>
<path d="M1620.7 189.43 L1624.45 193.18 L1628.2 189.43" fill="none" stroke="#e6e6e6" stroke-width="2.0" stroke-linecap="round" stroke-linejoin="round"/>
<path d="M1564.5 231.5 L1577.5 219.5 L1585 227.5 L1572 240 Z" fill="none" stroke="#c86ad6" stroke-width="1.8" stroke-linejoin="round"/><path d="M1564.5 231.5 L1570.5 226 L1578 234 L1572 240 Z" fill="#b44fc4" stroke="#c86ad6" stroke-width="1.2" stroke-linejoin="round"/>
<path d="M1638.7 228.58 L1642.35 232.22 L1646 228.58" fill="none" stroke="#e6e6e6" stroke-width="2.0" stroke-linecap="round" stroke-linejoin="round"/>
<path d="M1749 152.5 H1771.5 L1763.5 163 V174.5 H1757.5 V163 Z" fill="none" stroke="#d8d8d8" stroke-width="1.7" stroke-linejoin="miter"/>
<path d="M1768.6 223.68 L1772.25 227.32 L1775.9 223.68" fill="none" stroke="#e6e6e6" stroke-width="2.0" stroke-linecap="round" stroke-linejoin="round"/>
<circle cx="1826.3" cy="156.9" r="15" fill="none" stroke="#d8d8d8" stroke-width="1.7"/><path d="M1815.3 167.6 L1799 183.6" stroke="#d8d8d8" stroke-width="1.8" stroke-linecap="round"/>
<path d="M1842.6 223.68 L1846.25 227.32 L1849.9 223.68" fill="none" stroke="#e6e6e6" stroke-width="2.0" stroke-linecap="round" stroke-linejoin="round"/>
<rect x="1867.9" y="135.2" width="1.2" height="133.9" fill="#4d4d4d"/>
<g fill="none" stroke="#c8501e"><rect x="1895.7" y="141.3" width="40.6" height="41" stroke-width="2.2"/><rect x="1900.5" y="146.5" width="13" height="13" stroke-width="1.7"/><rect x="1918.5" y="146.5" width="13" height="13" stroke-width="1.7"/><rect x="1900.5" y="164.5" width="13" height="13" stroke-width="1.7"/><rect x="1918.5" y="164.5" width="13" height="13" stroke-width="1.7"/></g>
<rect x="1963" y="135.2" width="1.2" height="133.9" fill="#4d4d4d"/>
<g fill="none" stroke="#cfcfcf" stroke-width="1.7"><rect x="1989.8" y="142.2" width="40.4" height="40"/><path d="M1989.8 160 h5 M2025 160 h5.2 M1989.8 171.5 h14 M2003 176 V182.2 M2016.5 178 V182.2 M2022 171.5 h8"/></g><rect x="1990.6" y="143" width="38.8" height="4.6" fill="#8a8a8a"/>
<circle cx="2008.5" cy="159.5" r="12.3" fill="#292929" stroke="#d8d8d8" stroke-width="1.7"/><rect x="2001.5" y="160" width="3.6" height="6.5" fill="#9a9a9a"/><rect x="2006.2" y="153.5" width="3.6" height="13" fill="none" stroke="#d0d0d0" stroke-width="1.1"/><rect x="2011" y="156.5" width="3.6" height="10" fill="#2b8fe0"/><path d="M2017.5 168.5 L2030 181.5" stroke="#d8d8d8" stroke-width="2" stroke-linecap="round"/>
<rect x="2056" y="135.2" width="1.2" height="133.9" fill="#4d4d4d"/>
<circle cx="2212.4" cy="198.8" r="56.3" fill="#fff"/><rect x="2181.6" y="173.1" width="61.1" height="52.8" fill="#5b67f1"/>
<rect x="2190" y="181.1" width="20.3" height="14.2" fill="#fff"/>
<rect x="2190" y="202.7" width="20.3" height="15.5" fill="#fff"/>
<rect x="2215" y="181.1" width="20" height="14.2" fill="#fff"/>
<rect x="2215" y="202.7" width="20" height="15.5" fill="#fff"/>
<circle cx="2431.6" cy="180" r="13.6" fill="none" stroke="#fff" stroke-width="9"/><rect x="2426.9" y="154.4" width="9.3" height="27.7" rx="4.6" fill="#fff"/>
<rect x="2483.15" y="211.7" width="3.3" height="25" fill="#fff"/>
<path d="M2851.1 254.02 L2857.65 260.58 L2864.2 254.02" fill="none" stroke="#e6e6e6" stroke-width="2.0" stroke-linecap="round" stroke-linejoin="round"/>
<g><defs><clipPath id="xl"><rect x="38" y="35" width="19.7" height="23.8" rx="2.6"/></clipPath></defs><g clip-path="url(#xl)"><rect x="38" y="35" width="19.7" height="23.8" fill="#2d8a34"/><rect x="38" y="43.5" width="10" height="15.3" fill="#1f6f38"/><rect x="38" y="35" width="9.3" height="8.5" fill="#6ccf5c"/><rect x="47.3" y="35" width="10.4" height="8.5" fill="#a7e46b"/></g><rect x="35" y="42.7" width="13" height="13" rx="2.4" fill="#186c43"/><path d="M38.6 45.6 L44.6 52.8 M44.6 45.6 L38.6 52.8" stroke="#fff" stroke-width="2.1"/></g>
<path d="M419.2 45.65 L425.5 51.95 L431.8 45.65" fill="none" stroke="#e6e6e6" stroke-width="1.9" stroke-linecap="round" stroke-linejoin="round"/>
<circle cx="2489.3" cy="43.8" r="6.8" fill="none" stroke="#f2f2f2" stroke-width="1.9"/><path d="M2484.3 48.8 L2476.3 57.3" stroke="#f2f2f2" stroke-width="2" stroke-linecap="round"/>
<defs><clipPath id="av"><circle cx="2571" cy="46.5" r="18.3"/></clipPath><linearGradient id="avg" x1="0" y1="0" x2="0" y2="1"><stop offset="0" stop-color="#a9cbe0"/><stop offset="0.5" stop-color="#8cc4d4"/><stop offset="1" stop-color="#a8c9cf"/></linearGradient></defs><g clip-path="url(#av)"><rect x="2552" y="28" width="38" height="38" fill="url(#avg)"/><ellipse cx="2571.5" cy="45" rx="6.6" ry="8.4" fill="#bd917e"/><path d="M2556 66 Q2558 56 2571.5 55.5 Q2585 56 2587 66 Z" fill="#d6c6b6"/><ellipse cx="2571.5" cy="40" rx="6.4" ry="4.2" fill="#c39c8a"/></g><circle cx="2571" cy="46.5" r="18.3" fill="none" stroke="#3a3a3a" stroke-width="1"/>
<path d="M2634.5 36.5 H2647.8 L2652.5 43.6 L2641.2 56.2 L2629.8 43.6 Z M2629.8 43.6 H2652.5 M2637 43.6 L2641.2 36.8 L2645.3 43.6 L2641.2 55.5 Z" fill="none" stroke="#f2f2f2" stroke-width="1.7" stroke-linejoin="round"/>
<path d="M2703.6 46.3 H2718.2" stroke="#f2f2f2" stroke-width="1.7"/>
<rect x="2775.8" y="42.3" width="11" height="11.8" rx="2.3" fill="none" stroke="#f2f2f2" stroke-width="1.7"/><path d="M2779.3 39.2 H2787.3 Q2790.2 39.2 2790.2 42.2 V50.8" fill="none" stroke="#f2f2f2" stroke-width="1.7"/>
<path d="M2848 39.5 L2862.6 54.6 M2862.6 39.5 L2848 54.6" stroke="#f2f2f2" stroke-width="1.9" stroke-linecap="round"/>
<path d="M2629.8 96.5 H2644.2 V107.5 H2636 L2632.2 111.2 V107.5 H2629.8 Z" fill="none" stroke="#e8e8e8" stroke-width="1.5" stroke-linejoin="round"/>
<path d="M2780.5 101 H2775 V112.5 H2790 V108.5 M2779.5 108 Q2780 100.5 2787.5 100.5 M2785 96.5 L2789.2 100.5 L2785 104.5" fill="none" stroke="#0a0a0a" stroke-width="1.6" stroke-linejoin="round" stroke-linecap="round"/>
<path d="M2858.9 103.35 L2862.6 107.05 L2866.3 103.35" fill="none" stroke="#0a0a0a" stroke-width="1.8" stroke-linecap="round" stroke-linejoin="round"/>
<path d="M2869.3 295.3 L2875.6 287.1 L2882 295.3 Z" fill="#9e9e9e" stroke="#9e9e9e" stroke-width="1.5" stroke-linejoin="round"/>
<path d="M2869.3 1655 L2875.6 1663.2 L2882 1655 Z" fill="#9e9e9e" stroke="#9e9e9e" stroke-width="1.5" stroke-linejoin="round"/>
<path d="M2233 1687.3 L2224.5 1693.3 L2233 1699.3 Z" fill="#9e9e9e" stroke="#9e9e9e" stroke-width="1.5" stroke-linejoin="round"/>
<path d="M2842 1687.3 L2850.5 1693.3 L2842 1699.3 Z" fill="#e0e0e0" stroke="#e0e0e0" stroke-width="1.5" stroke-linejoin="round"/>
<path d="M54.5 1686.2 L47 1693 L54.5 1699.8" fill="none" stroke="#7a7a7a" stroke-width="1.7" stroke-linecap="round" stroke-linejoin="round"/>
<path d="M95.5 1686.2 L103 1693 L95.5 1699.8" fill="none" stroke="#d0d0d0" stroke-width="1.7" stroke-linecap="round" stroke-linejoin="round"/>
<circle cx="2088.8" cy="1692.6" r="2.1" fill="#e6e6e6"/><circle cx="2095.3" cy="1692.6" r="2.1" fill="#e6e6e6"/><circle cx="2101.8" cy="1692.6" r="2.1" fill="#e6e6e6"/>
<path d="M2135 1693.3 H2151.8 M2143.4 1685 V1701.7" stroke="#e6e6e6" stroke-width="1.6"/>
<rect x="2190.3" y="1687.3" width="4" height="3.4" fill="#e6e6e6"/><rect x="2190.3" y="1692.8" width="4" height="3.4" fill="#e6e6e6"/><rect x="2190.3" y="1698.3" width="4" height="3.4" fill="#e6e6e6"/>
<g fill="none" stroke="#e0e0e0" stroke-width="1.6"><path d="M99.7 1743.5 V1727 H120.3 V1733"/><path d="M99.7 1731 H120.3"/><path d="M103 1735.5 h6 M103 1739.5 h4" stroke-width="1.4"/><circle cx="114" cy="1739.3" r="5.6"/><circle cx="114" cy="1739.3" r="2.2" fill="#e0e0e0"/></g>
<g fill="none" stroke="#f0f0f0" stroke-width="1.8" stroke-linecap="round" stroke-linejoin="round"><circle cx="155" cy="1727.8" r="2.3"/><path d="M146.5 1731.5 Q155 1735.5 163.5 1731.5 M151.5 1733.5 V1739 L148 1745.5 M158.5 1733.5 V1737 M155 1739 L156.5 1741"/><path d="M157.5 1737.5 L166.5 1746 M166.5 1737.5 L157.5 1746"/></g>
<g fill="none" stroke="#f0f0f0" stroke-width="2"><rect x="2465.1" y="1725.1" width="18.1" height="17.9"/><path d="M2471.2 1725.1 v17.9 M2477.2 1725.1 v17.9 M2465.1 1731.1 h18.1 M2465.1 1737.1 h18.1"/></g>
<g fill="none" stroke="#f0f0f0" stroke-width="2"><rect x="2525" y="1725.1" width="19.9" height="17.9"/><rect x="2529.9" y="1729.4" width="10.2" height="11" stroke-width="1.8"/><path d="M2532.3 1732.6 h5.4 M2532.3 1735.2 h5.4 M2532.3 1737.8 h5.4" stroke-width="1.2"/></g>
<g fill="none" stroke="#f0f0f0" stroke-width="2"><rect x="2585.1" y="1725.1" width="19.9" height="17.9"/><path d="M2585.1 1736.5 H2597.5 V1725.1 M2591 1725.1 V1736.5"/></g>
<path d="M2633.3 1734.8 H2644.3 M2809 1734.8 H2820 M2814.5 1729.3 V1740.3" stroke="#d8d8d8" stroke-width="1.4"/>
</svg>

<span class="t" style="left:94.58px;top:37px;font-size:20.6px;color:#fff;transform:scaleX(0.8663);">point-of-sale-systems.xlsx  -  Read-Only</span>
<span class="t" style="left:41.22px;top:98px;font-size:19.5px;color:#fff;transform:scaleX(1.0044);">File</span>
<span class="t" style="left:110.82px;top:98px;font-size:19.5px;color:#fff;font-weight:700;transform:scaleX(1.0403);">Home</span>
<span class="t" style="left:197.22px;top:98px;font-size:19.5px;color:#fff;transform:scaleX(1.0060);">Insert</span>
<span class="t" style="left:276.22px;top:98px;font-size:19.5px;color:#fff;transform:scaleX(1.0232);">Draw</span>
<span class="t" style="left:352.22px;top:98px;font-size:19.5px;color:#fff;transform:scaleX(0.9786);">Page Layout</span>
<span class="t" style="left:490.22px;top:98px;font-size:19.5px;color:#fff;transform:scaleX(1.0036);">Formulas</span>
<span class="t" style="left:599.82px;top:98px;font-size:19.5px;color:#fff;transform:scaleX(1.0041);">Data</span>
<span class="t" style="left:670.22px;top:98px;font-size:19.5px;color:#fff;transform:scaleX(0.9628);">Review</span>
<span class="t" style="left:761.22px;top:98px;font-size:19.5px;color:#fff;transform:scaleX(1.0154);">View</span>
<span class="t" style="left:833.22px;top:98px;font-size:19.5px;color:#fff;transform:scaleX(1.0491);">Automate</span>
<span class="t" style="left:950.22px;top:98px;font-size:19.5px;color:#fff;transform:scaleX(1.0363);">Help</span>
<span class="t" style="left:2651.52px;top:97px;font-size:19.5px;color:#fff;transform:scaleX(1.0105);">Comments</span>
<span class="t" style="left:2798.32px;top:97px;font-size:19.5px;color:#0a0a0a;transform:scaleX(0.9601);">Share</span>
<span class="t" style="left:53.78px;top:280px;font-size:20px;color:#fff;transform:scaleX(0.9700);">A</span>
<span class="t" style="left:114.23px;top:280px;font-size:20px;color:#fff;transform:scaleX(0.9700);">B</span>
<span class="t" style="left:209.29px;top:280px;font-size:20px;color:#fff;transform:scaleX(0.9700);">C</span>
<span class="t" style="left:305.29px;top:280px;font-size:20px;color:#fff;transform:scaleX(0.9700);">D</span>
<span class="t" style="left:402.03px;top:280px;font-size:20px;color:#fff;transform:scaleX(0.9700);">E</span>
<span class="t" style="left:498.77px;top:280px;font-size:20px;color:#fff;transform:scaleX(0.9700);">F</span>
<span class="t" style="left:623.16px;top:280px;font-size:20px;color:#fff;transform:scaleX(0.9700);">G</span>
<span class="t" style="left:779.49px;top:280px;font-size:20px;color:#fff;transform:scaleX(0.9700);">H</span>
<span class="t" style="left:939.66px;top:280px;font-size:20px;color:#fff;transform:scaleX(0.9700);">I</span>
<span class="t" style="left:1093.55px;top:280px;font-size:20px;color:#fff;transform:scaleX(0.9700);">J</span>
<span class="t" style="left:1247.98px;top:280px;font-size:20px;color:#fff;transform:scaleX(0.9700);">K</span>
<span class="t" style="left:1405.11px;top:280px;font-size:20px;color:#fff;transform:scaleX(0.9700);">L</span>
<span class="t" style="left:1558.47px;top:280px;font-size:20px;color:#fff;transform:scaleX(0.9700);">M</span>
<span class="t" style="left:1715.39px;top:280px;font-size:20px;color:#fff;transform:scaleX(0.9700);">N</span>
<span class="t" style="left:1806.76px;top:280px;font-size:20px;color:#fff;transform:scaleX(0.9700);">O</span>
<span class="t" style="left:1867.93px;top:280px;font-size:20px;color:#fff;transform:scaleX(0.9700);">P</span>
<span class="t" style="left:1975.06px;top:280px;font-size:20px;color:#fff;transform:scaleX(0.9700);">Q</span>
<span class="t" style="left:2083.59px;top:280px;font-size:20px;color:#fff;transform:scaleX(0.9700);">R</span>
<span class="t" style="left:2175.98px;top:280px;font-size:20px;color:#fff;transform:scaleX(0.9700);">S</span>
<span class="t" style="left:2268.62px;top:280px;font-size:20px;color:#fff;transform:scaleX(0.9700);">T</span>
<span class="t" style="left:2359.64px;top:280px;font-size:20px;color:#fff;transform:scaleX(0.9700);">U</span>
<span class="t" style="left:2452.03px;top:280px;font-size:20px;color:#fff;transform:scaleX(0.9700);">V</span>
<span class="t" style="left:2541.19px;top:280px;font-size:20px;color:#fff;transform:scaleX(0.9700);">W</span>
<span class="t" style="left:2635.78px;top:280px;font-size:20px;color:#fff;transform:scaleX(0.9700);">X</span>
<span class="t" style="left:2727.88px;top:280px;font-size:20px;color:#fff;transform:scaleX(0.9700);">Y</span>
<span class="t" style="left:2820.57px;top:280px;font-size:20px;color:#fff;transform:scaleX(0.9700);">Z</span>
<span class="t" style="left:24.41px;top:316px;font-size:20px;color:#fff;transform:scaleX(0.8800);">1</span>
<span class="t" style="left:24.41px;top:351px;font-size:20px;color:#fff;transform:scaleX(0.8800);">2</span>
<span class="t" style="left:24.41px;top:386px;font-size:20px;color:#fff;transform:scaleX(0.8800);">3</span>
<span class="t" style="left:24.41px;top:411px;font-size:20px;color:#fff;transform:scaleX(0.8800);">4</span>
<span class="t" style="left:24.41px;top:441px;font-size:20px;color:#fff;transform:scaleX(0.8800);">5</span>
<span class="t" style="left:24.41px;top:479px;font-size:20px;color:#fff;transform:scaleX(0.8800);">7</span>
<span class="t" style="left:24.41px;top:505px;font-size:20px;color:#fff;transform:scaleX(0.8800);">8</span>
<span class="t" style="left:24.41px;top:541px;font-size:20px;color:#fff;transform:scaleX(0.8800);">9</span>
<span class="t" style="left:19.51px;top:578px;font-size:20px;color:#fff;transform:scaleX(0.8800);">10</span>
<span class="t" style="left:20.16px;top:615px;font-size:20px;color:#fff;transform:scaleX(0.8800);">11</span>
<span class="t" style="left:19.51px;top:652px;font-size:20px;color:#fff;transform:scaleX(0.8800);">12</span>
<span class="t" style="left:19.51px;top:689px;font-size:20px;color:#fff;transform:scaleX(0.8800);">13</span>
<span class="t" style="left:19.51px;top:726px;font-size:20px;color:#fff;transform:scaleX(0.8800);">14</span>
<span class="t" style="left:19.51px;top:763px;font-size:20px;color:#fff;transform:scaleX(0.8800);">15</span>
<span class="t" style="left:19.51px;top:800px;font-size:20px;color:#fff;transform:scaleX(0.8800);">16</span>
<span class="t" style="left:19.51px;top:837px;font-size:20px;color:#fff;transform:scaleX(0.8800);">17</span>
<span class="t" style="left:19.51px;top:874px;font-size:20px;color:#fff;transform:scaleX(0.8800);">18</span>
<span class="t" style="left:19.51px;top:911px;font-size:20px;color:#fff;transform:scaleX(0.8800);">19</span>
<span class="t" style="left:19.51px;top:948px;font-size:20px;color:#fff;transform:scaleX(0.8800);">20</span>
<span class="t" style="left:19.51px;top:985px;font-size:20px;color:#fff;transform:scaleX(0.8800);">21</span>
<span class="t" style="left:19.51px;top:1022px;font-size:20px;color:#fff;transform:scaleX(0.8800);">22</span>
<span class="t" style="left:19.51px;top:1059px;font-size:20px;color:#fff;transform:scaleX(0.8800);">23</span>
<span class="t" style="left:19.51px;top:1096px;font-size:20px;color:#fff;transform:scaleX(0.8800);">24</span>
<span class="t" style="left:19.51px;top:1131px;font-size:20px;color:#fff;transform:scaleX(0.8800);">25</span>
<span class="t" style="left:19.51px;top:1173px;font-size:20px;color:#fff;transform:scaleX(0.8800);">28</span>
<span class="t" style="left:19.51px;top:1213px;font-size:20px;color:#fff;transform:scaleX(0.8800);">30</span>
<span class="t" style="left:19.51px;top:1248px;font-size:20px;color:#fff;transform:scaleX(0.8800);">31</span>
<span class="t" style="left:19.51px;top:1284px;font-size:20px;color:#fff;transform:scaleX(0.8800);">32</span>
<span class="t" style="left:19.51px;top:1319px;font-size:20px;color:#fff;transform:scaleX(0.8800);">33</span>
<span class="t" style="left:19.51px;top:1355px;font-size:20px;color:#fff;transform:scaleX(0.8800);">34</span>
<span class="t" style="left:19.51px;top:1384px;font-size:20px;color:#fff;transform:scaleX(0.8800);">35</span>
<span class="t" style="left:19.51px;top:1420px;font-size:20px;color:#fff;transform:scaleX(0.8800);">36</span>
<span class="t" style="left:19.51px;top:1463px;font-size:20px;color:#fff;transform:scaleX(0.8800);">38</span>
<span class="t" style="left:19.51px;top:1502px;font-size:20px;color:#fff;transform:scaleX(0.8800);">40</span>
<span class="t" style="left:19.51px;top:1537px;font-size:20px;color:#fff;transform:scaleX(0.8800);">41</span>
<span class="t" style="left:19.51px;top:1573px;font-size:20px;color:#fff;transform:scaleX(0.8800);">42</span>
<span class="t" style="left:19.51px;top:1603px;font-size:20px;color:#fff;transform:scaleX(0.8800);">43</span>
<span class="t" style="left:19.51px;top:1628px;font-size:20px;color:#fff;transform:scaleX(0.8800);">44</span>
<span class="t" style="left:19.51px;top:1652px;font-size:20px;color:#fff;transform:scaleX(0.8800);">45</span>
<span class="t" style="left:78.68px;top:305px;font-size:33px;color:#1f1f1f;font-weight:700;transform:scaleX(1.0968);">Returns on Invested Capital</span>
<span class="t" style="left:76.74px;top:343px;font-size:29px;color:#000;font-weight:700;transform:scaleX(1.0398);">ABC Company Inc.</span>
<span class="t" style="left:75.52px;top:382px;font-size:19.5px;color:#2a6fe6;font-weight:700;transform:scaleX(1.0388);">Go to Table of Contents</span>
<span class="t" style="left:210.04px;top:438px;font-size:24px;color:#fff;font-weight:700;transform:scaleX(1.0490);">Years to payback</span>
<span class="t" style="left:293.64px;top:474px;font-size:24px;color:#fff;font-weight:700;transform:scaleX(1.1426);">0.1</span>
<span class="t" style="left:753.94px;top:438px;font-size:24px;color:#fff;font-weight:700;transform:scaleX(1.0763);">5-Year Cash Generated ($&#x27;000)</span>
<span class="t" style="left:868.74px;top:474px;font-size:24px;color:#fff;font-weight:700;transform:scaleX(1.1274);">15,491,131</span>
<span class="t" style="left:1492.14px;top:438px;font-size:24px;color:#fff;font-weight:700;transform:scaleX(1.1047);">ROIC - 2030</span>
<span class="t" style="left:1525.84px;top:474px;font-size:24px;color:#fff;font-weight:700;transform:scaleX(1.2141);">53.8%</span>
<span class="t" style="left:625.05px;top:532px;font-size:28.8px;color:#fff;font-weight:700;transform:scaleX(1.0928);">Returns on Invested Capital Chart ($&#x27;000)</span>
<span class="t" style="left:669.75px;top:1124px;font-size:28.8px;color:#fff;font-weight:700;transform:scaleX(1.0987);">Returns on Invested Capital ($&#x27;000)</span>
<span class="t" style="left:697.75px;top:1413px;font-size:28.8px;color:#fff;font-weight:700;transform:scaleX(1.0683);">Payback Period Analysis ($&#x27;000)</span>
<span class="t" style="left:84.5px;top:1169px;font-size:19.9px;color:#fff;font-weight:700;transform:scaleX(1.0043);">Fiscal Year</span>
<span class="t" style="left:1075.07px;top:1169px;font-size:19.4px;color:#fff;font-weight:700;transform:scaleX(1.1232);">2026</span>
<span class="t" style="left:1231.12px;top:1169px;font-size:19.4px;color:#fff;font-weight:700;transform:scaleX(1.1232);">2027</span>
<span class="t" style="left:1387.17px;top:1169px;font-size:19.4px;color:#fff;font-weight:700;transform:scaleX(1.1232);">2028</span>
<span class="t" style="left:1543.22px;top:1169px;font-size:19.4px;color:#fff;font-weight:700;transform:scaleX(1.1232);">2029</span>
<span class="t" style="left:1699.07px;top:1169px;font-size:19.4px;color:#fff;font-weight:700;transform:scaleX(1.1232);">2030</span>
<span class="t" style="left:84.5px;top:1458px;font-size:19.9px;color:#fff;font-weight:700;transform:scaleX(1.0043);">Fiscal Year</span>
<span class="t" style="left:1075.07px;top:1458px;font-size:19.4px;color:#fff;font-weight:700;transform:scaleX(1.1232);">2026</span>
<span class="t" style="left:1231.12px;top:1458px;font-size:19.4px;color:#fff;font-weight:700;transform:scaleX(1.1232);">2027</span>
<span class="t" style="left:1387.17px;top:1458px;font-size:19.4px;color:#fff;font-weight:700;transform:scaleX(1.1232);">2028</span>
<span class="t" style="left:1543.22px;top:1458px;font-size:19.4px;color:#fff;font-weight:700;transform:scaleX(1.1232);">2029</span>
<span class="t" style="left:1699.07px;top:1458px;font-size:19.4px;color:#fff;font-weight:700;transform:scaleX(1.1232);">2030</span>
<span class="t" style="left:94.03px;top:1209px;font-size:19.3px;color:#000;transform:scaleX(0.9658);">Debts</span>
<span class="t" style="left:1136.43px;top:1209px;font-size:19.2px;color:#000;transform:scaleX(0.9382);">283</span>
<span class="t" style="left:1292.33px;top:1209px;font-size:19.2px;color:#000;transform:scaleX(0.9382);">237</span>
<span class="t" style="left:1448.53px;top:1209px;font-size:19.2px;color:#000;transform:scaleX(0.9382);">190</span>
<span class="t" style="left:1604.43px;top:1209px;font-size:19.2px;color:#000;transform:scaleX(0.9382);">141</span>
<span class="t" style="left:1770.23px;top:1209px;font-size:19.2px;color:#000;transform:scaleX(0.9388);">90</span>
<span class="t" style="left:94.03px;top:1244px;font-size:19.3px;color:#000;transform:scaleX(0.9749);">Equity</span>
<span class="t" style="left:1099.93px;top:1244px;font-size:19.2px;color:#000;transform:scaleX(0.9593);">465,410</span>
<span class="t" style="left:1239.33px;top:1244px;font-size:19.2px;color:#000;transform:scaleX(0.9728);">1,836,393</span>
<span class="t" style="left:1395.53px;top:1244px;font-size:19.2px;color:#000;transform:scaleX(0.9728);">4,514,776</span>
<span class="t" style="left:1551.43px;top:1244px;font-size:19.2px;color:#000;transform:scaleX(0.9728);">8,924,887</span>
<span class="t" style="left:1697.23px;top:1244px;font-size:19.2px;color:#000;transform:scaleX(0.9688);">15,491,863</span>
<span class="t" style="left:76.99px;top:1278px;font-size:22.8px;color:#fff;font-weight:700;transform:scaleX(1.0457);">Total Invested Capital</span>
<span class="t" style="left:1086.03px;top:1281px;font-size:19.3px;color:#fff;font-weight:700;transform:scaleX(1.1269);">465,693</span>
<span class="t" style="left:1224.13px;top:1281px;font-size:19.3px;color:#fff;font-weight:700;transform:scaleX(1.1232);">1,836,630</span>
<span class="t" style="left:1380.33px;top:1281px;font-size:19.3px;color:#fff;font-weight:700;transform:scaleX(1.1232);">4,514,966</span>
<span class="t" style="left:1536.23px;top:1281px;font-size:19.3px;color:#fff;font-weight:700;transform:scaleX(1.1232);">8,925,028</span>
<span class="t" style="left:1679.89px;top:1281px;font-size:19.3px;color:#fff;font-weight:700;transform:scaleX(1.1242);">15,491,952</span>
<span class="t" style="left:94.03px;top:1315px;font-size:19.3px;color:#000;transform:scaleX(0.9822);">Net Operating Profit After Tax (NOPAT)</span>
<span class="t" style="left:1099.93px;top:1315px;font-size:19.2px;color:#000;transform:scaleX(0.9593);">464,723</span>
<span class="t" style="left:1239.33px;top:1315px;font-size:19.2px;color:#000;transform:scaleX(0.9728);">1,370,996</span>
<span class="t" style="left:1395.53px;top:1315px;font-size:19.2px;color:#000;transform:scaleX(0.9728);">2,678,393</span>
<span class="t" style="left:1551.43px;top:1315px;font-size:19.2px;color:#000;transform:scaleX(0.9893);">4,410,119</span>
<span class="t" style="left:1707.23px;top:1315px;font-size:19.2px;color:#000;transform:scaleX(0.9728);">6,566,981</span>
<span class="t" style="left:77.69px;top:1349px;font-size:22.8px;color:#fff;font-weight:700;transform:scaleX(1.0392);">ROIC</span>
<span class="t" style="left:1108.01px;top:1352px;font-size:19.3px;color:#fff;font-weight:700;transform:scaleX(1.1956);">99.8%</span>
<span class="t" style="left:1251.77px;top:1352px;font-size:19.3px;color:#fff;font-weight:700;transform:scaleX(1.2048);">119.1%</span>
<span class="t" style="left:1420.11px;top:1352px;font-size:19.3px;color:#fff;font-weight:700;transform:scaleX(1.1956);">84.3%</span>
<span class="t" style="left:1576.01px;top:1352px;font-size:19.3px;color:#fff;font-weight:700;transform:scaleX(1.1956);">65.6%</span>
<span class="t" style="left:1731.81px;top:1352px;font-size:19.3px;color:#fff;font-weight:700;transform:scaleX(1.1956);">53.8%</span>
<span class="t" style="left:94.03px;top:1498px;font-size:19.3px;color:#000;transform:scaleX(0.9916);">Net Profit After Tax</span>
<span class="t" style="left:1099.93px;top:1498px;font-size:19.2px;color:#000;transform:scaleX(0.9593);">464,723</span>
<span class="t" style="left:1239.33px;top:1498px;font-size:19.2px;color:#000;transform:scaleX(0.9728);">1,370,996</span>
<span class="t" style="left:1395.53px;top:1498px;font-size:19.2px;color:#000;transform:scaleX(0.9728);">2,678,393</span>
<span class="t" style="left:1551.43px;top:1498px;font-size:19.2px;color:#000;transform:scaleX(0.9893);">4,410,119</span>
<span class="t" style="left:1707.23px;top:1498px;font-size:19.2px;color:#000;transform:scaleX(0.9728);">6,566,981</span>
<span class="t" style="left:94.03px;top:1533px;font-size:19.3px;color:#000;transform:scaleX(0.8268);">CAPEX</span>
<span class="t" style="left:1139.03px;top:1533px;font-size:19.2px;color:#000;transform:scaleX(1.0151);">(82)</span>
<span class="t" style="left:76.99px;top:1566px;font-size:22.8px;color:#fff;font-weight:700;transform:scaleX(1.0201);">Cumulative Cash Generated (Spent)</span>
<span class="t" style="left:1086.03px;top:1569px;font-size:19.3px;color:#fff;font-weight:700;transform:scaleX(1.1269);">464,641</span>
<span class="t" style="left:1224.13px;top:1569px;font-size:19.3px;color:#fff;font-weight:700;transform:scaleX(1.1232);">1,835,638</span>
<span class="t" style="left:1380.33px;top:1569px;font-size:19.3px;color:#fff;font-weight:700;transform:scaleX(1.1232);">4,514,031</span>
<span class="t" style="left:1536.23px;top:1569px;font-size:19.3px;color:#fff;font-weight:700;transform:scaleX(1.1232);">8,924,150</span>
<span class="t" style="left:1679.89px;top:1569px;font-size:19.3px;color:#fff;font-weight:700;transform:scaleX(1.1242);">15,491,131</span>
<span class="t" style="left:75.5px;top:1601px;font-size:19.9px;color:#1f1f1f;font-weight:700;transform:scaleX(0.9922);">Payback year</span>
<span class="t" style="left:1093.42px;top:1601px;font-size:19.4px;color:#1f1f1f;font-weight:700;transform:scaleX(1.0063);">1</span>
<span class="t" style="left:83.08px;top:655px;font-size:18.5px;color:#000;font-weight:700;transform:scaleX(1.1580);">18,000,000</span>
<span class="t" style="left:83.08px;top:694px;font-size:18.5px;color:#000;font-weight:700;transform:scaleX(1.1580);">16,000,000</span>
<span class="t" style="left:83.08px;top:734px;font-size:18.5px;color:#000;font-weight:700;transform:scaleX(1.1580);">14,000,000</span>
<span class="t" style="left:83.08px;top:773px;font-size:18.5px;color:#000;font-weight:700;transform:scaleX(1.1580);">12,000,000</span>
<span class="t" style="left:83.08px;top:812px;font-size:18.5px;color:#000;font-weight:700;transform:scaleX(1.1580);">10,000,000</span>
<span class="t" style="left:94.99px;top:851px;font-size:18.5px;color:#000;font-weight:700;transform:scaleX(1.1580);">8,000,000</span>
<span class="t" style="left:94.99px;top:890px;font-size:18.5px;color:#000;font-weight:700;transform:scaleX(1.1580);">6,000,000</span>
<span class="t" style="left:94.99px;top:929px;font-size:18.5px;color:#000;font-weight:700;transform:scaleX(1.1580);">4,000,000</span>
<span class="t" style="left:94.99px;top:969px;font-size:18.5px;color:#000;font-weight:700;transform:scaleX(1.1580);">2,000,000</span>
<span class="t" style="left:340.9px;top:757px;font-size:19.4px;color:#fff;font-weight:700;transform:scaleX(1.1750);">99.8%</span>
<span class="t" style="left:652.59px;top:709px;font-size:19.4px;color:#fff;font-weight:700;transform:scaleX(1.1750);">119.1%</span>
<span class="t" style="left:975px;top:796px;font-size:19.4px;color:#fff;font-weight:700;transform:scaleX(1.1750);">84.3%</span>
<span class="t" style="left:1292.4px;top:843px;font-size:19.4px;color:#fff;font-weight:700;transform:scaleX(1.1750);">65.6%</span>
<span class="t" style="left:1609.7px;top:873px;font-size:19.4px;color:#fff;font-weight:700;transform:scaleX(1.1750);">53.8%</span>
<span class="t" style="left:346.14px;top:1071px;font-size:22.3px;color:#000;font-weight:700;transform:scaleX(1.1200);">2026</span>
<span class="t" style="left:663.18px;top:1071px;font-size:22.3px;color:#000;font-weight:700;transform:scaleX(1.1200);">2027</span>
<span class="t" style="left:980.22px;top:1071px;font-size:22.3px;color:#000;font-weight:700;transform:scaleX(1.1200);">2028</span>
<span class="t" style="left:1297.26px;top:1071px;font-size:22.3px;color:#000;font-weight:700;transform:scaleX(1.1200);">2029</span>
<span class="t" style="left:1614.3px;top:1071px;font-size:22.3px;color:#000;font-weight:700;transform:scaleX(1.1200);">2030</span>
<span class="t" style="left:328.46px;top:588px;font-size:26px;color:#000;font-weight:700;">Total Invested Capital</span>
<span class="t" style="left:825.66px;top:588px;font-size:26px;color:#000;font-weight:700;">Net Operating Profit After Tax (NOPAT)</span>
<span class="t" style="left:1531.46px;top:588px;font-size:26px;color:#000;font-weight:700;">ROIC</span>
<span class="t" style="left:51.16px;top:195px;font-size:18.5px;color:#6f6f6f;transform:scaleX(0.8789);">Paste</span>
<span class="t" style="left:141.68px;top:144px;font-size:18px;color:#fff;transform:scaleX(1.0046);">Cut</span>
<span class="t" style="left:141.68px;top:183px;font-size:18px;color:#fff;transform:scaleX(1.0100);">Copy</span>
<span class="t" style="left:141.68px;top:222px;font-size:18px;color:#fff;transform:scaleX(0.9748);">Format Painter</span>
<span class="t" style="left:108.66px;top:255px;font-size:16px;color:#fff;transform:scaleX(1.0116);">Clipboard</span>
<span class="t" style="left:298.28px;top:156px;font-size:18px;color:#fff;transform:scaleX(1.0063);">Tahoma</span>
<span class="t" style="left:481.88px;top:156px;font-size:18px;color:#fff;transform:scaleX(1.0129);">8</span>
<span class="t" style="left:554.2px;top:149px;font-size:28px;color:#dcdcdc;transform:scaleX(0.9049);">A</span>
<span class="t" style="left:595.5px;top:154px;font-size:22.3px;color:#dcdcdc;transform:scaleX(0.9145);">A</span>
<span class="t" style="left:306.26px;top:199px;font-size:21px;color:#dedede;font-weight:700;transform:scaleX(0.8889);">B</span>
<span class="t" style="left:345.96px;top:200px;font-size:21px;color:#dedede;font-style:italic;transform:scaleX(1.9505);font-family:'Liberation Serif',serif;">I</span>
<span class="t" style="left:383.02px;top:200px;font-size:19.5px;color:#dedede;transform:scaleX(1.0055);">U</span>
<span class="t" style="left:575px;top:198px;font-size:23.3px;color:#dcdcdc;transform:scaleX(0.9010);">A</span>
<span class="t" style="left:429.66px;top:255px;font-size:16px;color:#fff;transform:scaleX(1.0114);">Font</span>
<span class="t" style="left:896.58px;top:156px;font-size:18px;color:#fff;transform:scaleX(0.9783);">Wrap Text</span>
<span class="t" style="left:896.58px;top:204px;font-size:18px;color:#fff;">Merge &amp; Center</span>
<span class="t" style="left:809.86px;top:255px;font-size:16px;color:#fff;transform:scaleX(1.0215);">Alignment</span>
<span class="t" style="left:1098.88px;top:156px;font-size:18px;color:#fff;transform:scaleX(0.9251);">General</span>
<span class="t" style="left:1107.3px;top:199px;font-size:26.5px;color:#d6d6d6;transform:scaleX(0.7735);">$</span>
<span class="t" style="left:1163.2px;top:199px;font-size:29px;color:#d6d6d6;transform:scaleX(0.9230);">%</span>
<span class="t" style="left:1162.86px;top:255px;font-size:16px;color:#fff;transform:scaleX(1.0206);">Number</span>
<span class="t" style="left:1347.08px;top:194px;font-size:18px;color:#fff;transform:scaleX(0.9916);">Insert</span>
<span class="t" style="left:1409.18px;top:194px;font-size:18px;color:#fff;transform:scaleX(0.9713);">Delete</span>
<span class="t" style="left:1471.88px;top:193px;font-size:18px;color:#fff;transform:scaleX(1.0146);">Format</span>
<span class="t" style="left:1417.76px;top:255px;font-size:16px;color:#fff;transform:scaleX(0.9218);">Cells</span>
<span class="t" style="left:1592.58px;top:144px;font-size:18px;color:#fff;transform:scaleX(1.0095);">AutoSum</span>
<span class="t" style="left:1593.28px;top:183px;font-size:18px;color:#fff;transform:scaleX(0.8977);">Fill</span>
<span class="t" style="left:1592.78px;top:222px;font-size:18px;color:#fff;transform:scaleX(0.9309);">Clear</span>
<span class="t" style="left:1730.2px;top:139px;font-size:25.5px;color:#3a96dd;transform:scaleX(0.8408);">A</span>
<span class="t" style="left:1730.8px;top:160px;font-size:25.5px;color:#d8d8d8;transform:scaleX(0.8474);">Z</span>
<span class="t" style="left:1724.08px;top:193px;font-size:18px;color:#fff;transform:scaleX(1.0644);">Sort &amp;</span>
<span class="t" style="left:1724.08px;top:217px;font-size:18px;color:#fff;transform:scaleX(0.9760);">Filter</span>
<span class="t" style="left:1794.48px;top:193px;font-size:18px;color:#fff;transform:scaleX(1.0426);">Find &amp;</span>
<span class="t" style="left:1789.88px;top:217px;font-size:18px;color:#fff;transform:scaleX(0.9323);">Select</span>
<span class="t" style="left:1681.96px;top:255px;font-size:16px;color:#fff;transform:scaleX(0.9930);">Editing</span>
<span class="t" style="left:1884.38px;top:193px;font-size:18px;color:#fff;transform:scaleX(1.0444);">Add-ins</span>
<span class="t" style="left:1887.96px;top:255px;font-size:16px;color:#fff;transform:scaleX(0.9950);">Add-ins</span>
<span class="t" style="left:1979.18px;top:193px;font-size:18px;color:#fff;transform:scaleX(0.9797);">Analyze</span>
<span class="t" style="left:1991.78px;top:217px;font-size:18px;color:#fff;transform:scaleX(0.9873);">Data</span>
<span class="t" style="left:2293.83px;top:156px;font-size:48.5px;color:#fff;font-weight:700;-webkit-text-stroke:1.9px #fff;">FINM</span>
<span class="t" style="left:2450.66px;top:156px;font-size:48.5px;color:#fff;font-weight:700;transform:scaleX(0.8864);-webkit-text-stroke:1.9px #fff;">DELSLAB</span>
<span class="t" style="left:2293.83px;top:209px;font-size:33px;color:#fff;transform:scaleX(1.1868);">T</span>
<span class="t" style="left:2335.97px;top:207px;font-size:36px;color:#fff;transform:scaleX(1.0682);">e</span>
<span class="t" style="left:2380.69px;top:207px;font-size:36px;color:#fff;transform:scaleX(1.1246);">m</span>
<span class="t" style="left:2436.22px;top:207px;font-size:36px;color:#fff;transform:scaleX(1.2223);">p</span>
<span class="t" style="left:2510.24px;top:207px;font-size:36px;color:#fff;transform:scaleX(1.2223);">a</span>
<span class="t" style="left:2551.89px;top:207px;font-size:36px;color:#fff;transform:scaleX(1.6757);">t</span>
<span class="t" style="left:2587.36px;top:207px;font-size:36px;color:#fff;transform:scaleX(1.1452);">e</span>
<span class="t" style="left:2632.08px;top:207px;font-size:36px;color:#fff;transform:scaleX(1.1882);">s</span>
<span class="t" style="left:189.32px;top:1685px;font-size:22px;color:#fff;transform:scaleX(0.9535);">Contents</span>
<span class="t" style="left:312.62px;top:1685px;font-size:22px;color:#111;transform:scaleX(0.9446);">Dashboard</span>
<span class="t" style="left:453.52px;top:1685px;font-size:22px;color:#111;transform:scaleX(0.9091);">Revenue</span>
<span class="t" style="left:571.32px;top:1685px;font-size:22px;color:#111;transform:scaleX(0.8779);">COGS &amp; OPEX</span>
<span class="t" style="left:742.82px;top:1685px;font-size:22px;color:#111;transform:scaleX(0.9348);">Payroll</span>
<span class="t" style="left:844.12px;top:1685px;font-size:22px;color:#111;transform:scaleX(0.8401);">CAPEX</span>
<span class="t" style="left:944.62px;top:1685px;font-size:22px;color:#111;transform:scaleX(0.9355);">CapTable</span>
<span class="t" style="left:1070.32px;top:1685px;font-size:22px;color:#111;transform:scaleX(0.9544);">Capital</span>
<span class="t" style="left:1174.42px;top:1685px;font-size:22px;color:#111;transform:scaleX(0.7726);">IS</span>
<span class="t" style="left:1228.22px;top:1685px;font-size:22px;color:#111;transform:scaleX(0.8204);">CF</span>
<span class="t" style="left:1289.42px;top:1685px;font-size:22px;color:#111;transform:scaleX(0.8062);">BS</span>
<span class="t" style="left:1350.32px;top:1685px;font-size:22px;color:#111;transform:scaleX(0.9114);">Scenarios</span>
<span class="t" style="left:1478.42px;top:1685px;font-size:22px;color:#111;transform:scaleX(0.9906);">Valuation</span>
<span class="t" style="left:1607.62px;top:1685px;font-size:22px;color:#111;transform:scaleX(0.9366);">Summary</span>
<span class="t" style="left:1733.32px;top:1685px;font-size:22px;color:#111;transform:scaleX(0.8164);">BE</span>
<span class="t" style="left:1879.42px;top:1685px;font-size:22px;color:#111;transform:scaleX(0.9192);">Charts</span>
<span class="t" style="left:1978.32px;top:1685px;font-size:22px;color:#111;transform:scaleX(0.8235);">KPIs</span>
<span class="t" style="left:2053.82px;top:1685px;font-size:22px;color:#111;transform:scaleX(0.9761);clip-path:inset(0 26% 0 0);">Sc</span>
<span class="t" style="left:1794.12px;top:1680px;font-size:22px;color:#111;transform:scaleX(0.8902);">ROIC</span>
<span class="t" style="left:26.78px;top:1728px;font-size:15.4px;color:#e8e8e8;transform:scaleX(0.9718);">Ready</span>
<span class="t" style="left:172.88px;top:1728px;font-size:15.4px;color:#f0f0f0;font-weight:700;transform:scaleX(1.0246);">Accessibility: Investigate</span>
<span class="t" style="left:2839.48px;top:1728px;font-size:15.4px;color:#e8e8e8;transform:scaleX(1.0094);">120%</span>
</body></html>
